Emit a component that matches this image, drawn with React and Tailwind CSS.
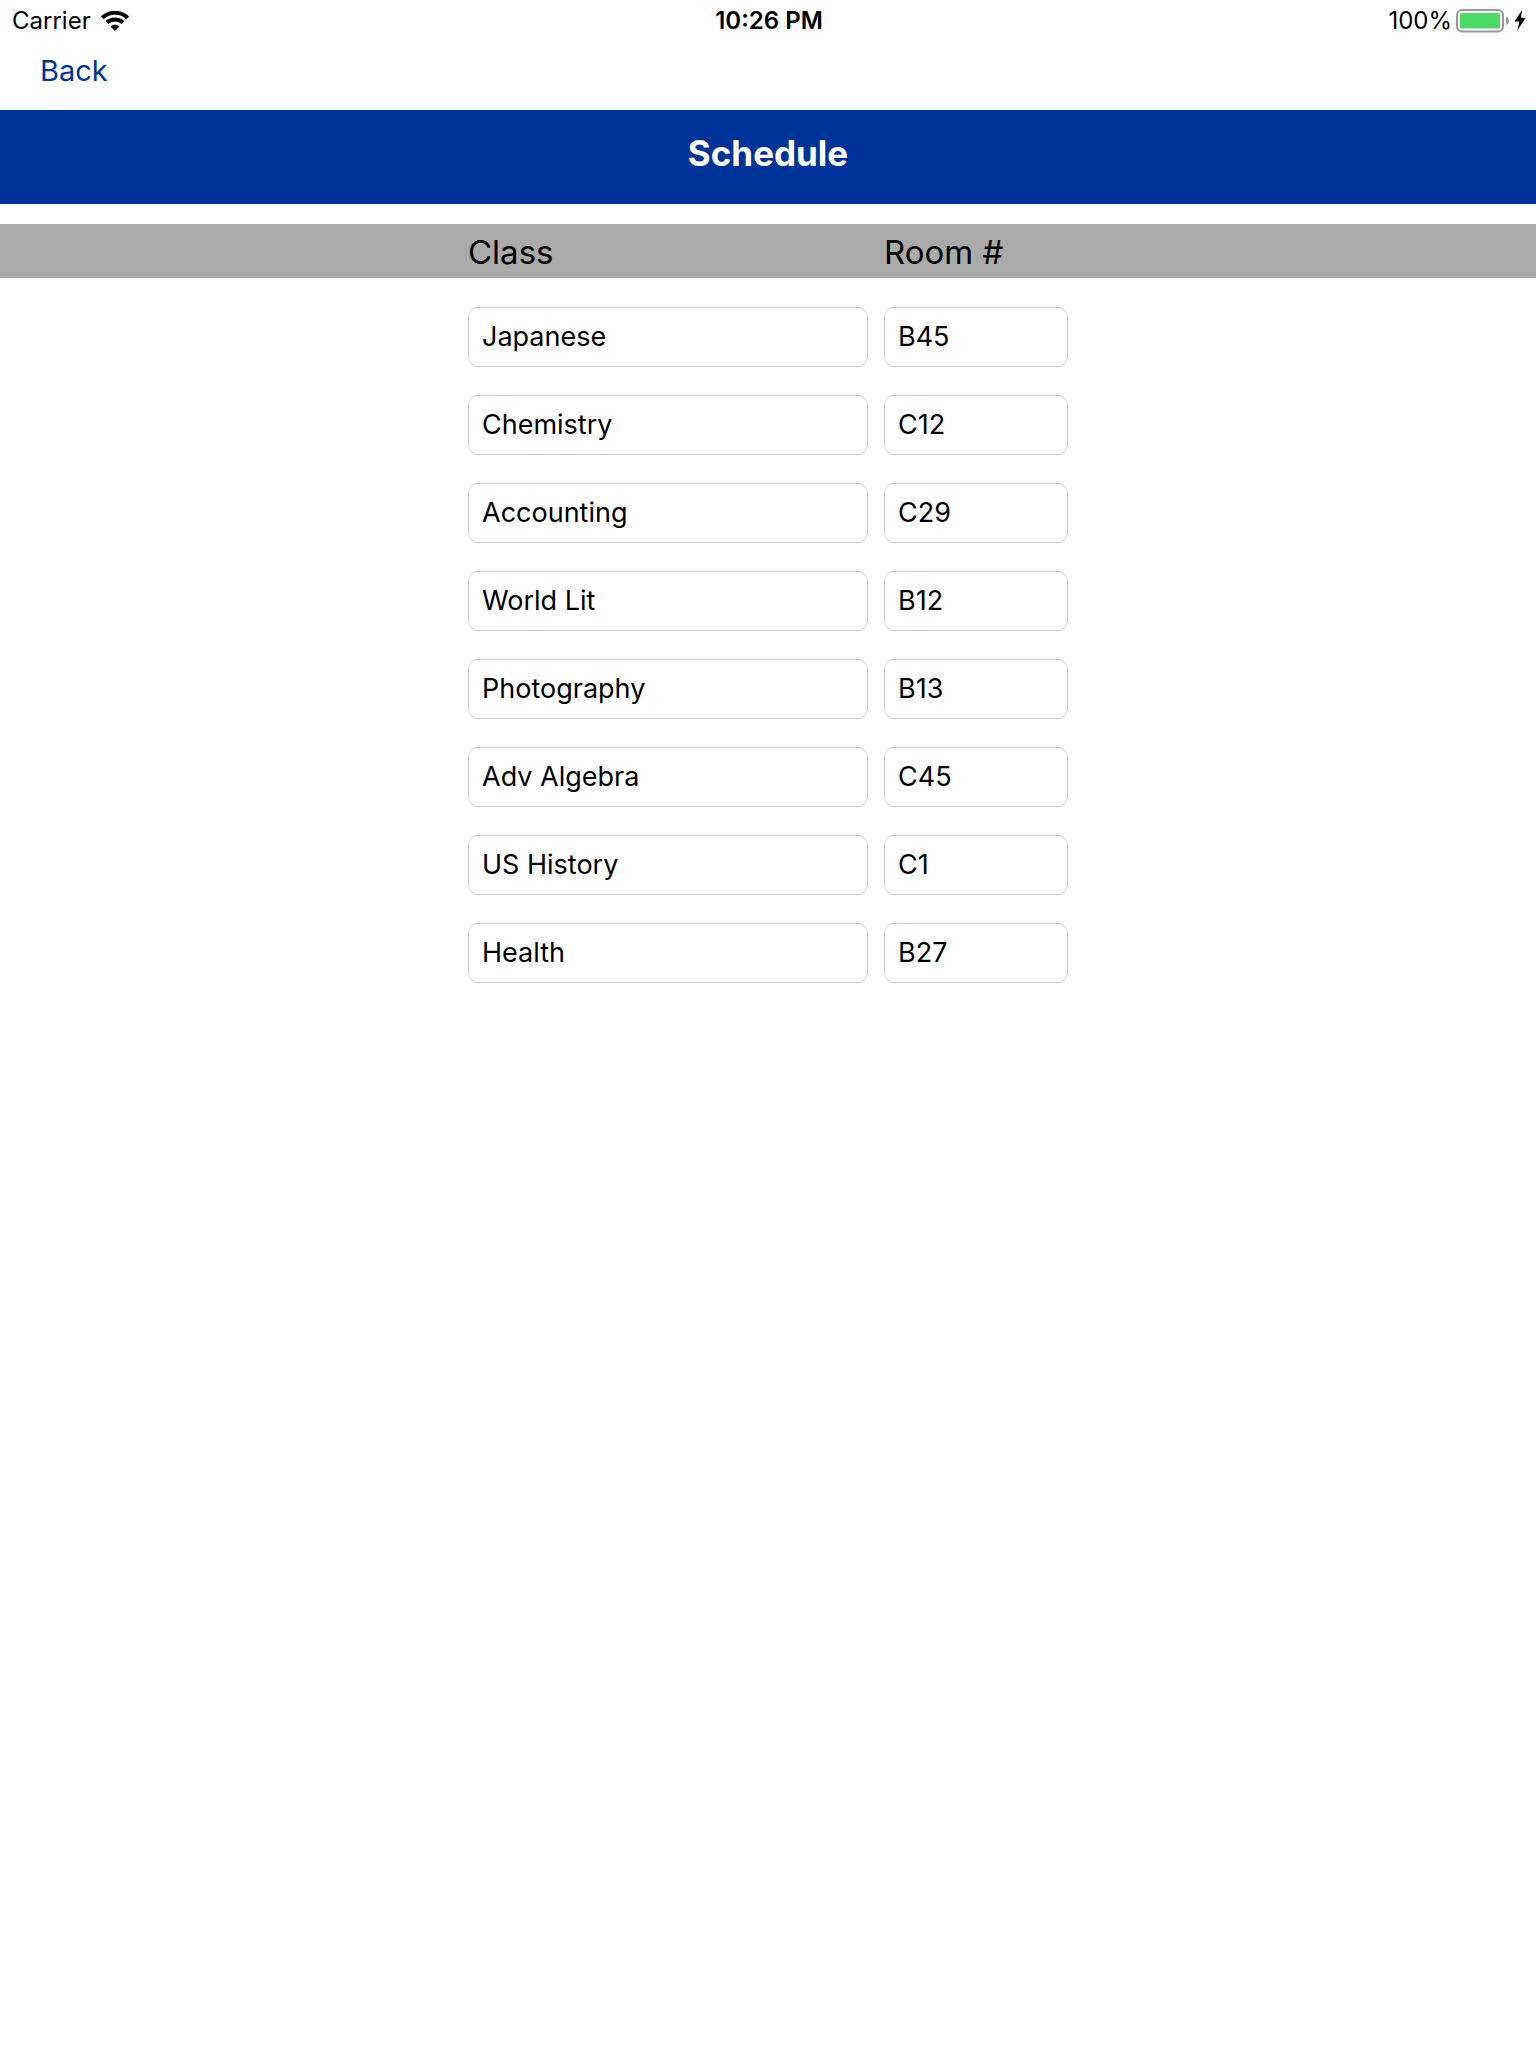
import React from 'react';

const classes = [
  { name: 'Japanese', room: 'B45' },
  { name: 'Chemistry', room: 'C12' },
  { name: 'Accounting', room: 'C29' },
  { name: 'World Lit', room: 'B12' },
  { name: 'Photography', room: 'B13' },
  { name: 'Adv Algebra', room: 'C45' },
  { name: 'US History', room: 'C1' },
  { name: 'Health', room: 'B27' },
];

const WifiIcon = () => (
  <svg className="w-7 h-5" viewBox="0 0 28 20" fill="none" stroke="black" aria-hidden="true">
    <path d="M1.3 6.8C8.4 .2 19.6 .2 26.7 6.8" strokeWidth="4" />
    <path d="M5.9 11.6C10.4 7.5 17.6 7.5 22.1 11.6" strokeWidth="4" />
    <path d="M14 20L9.5 15.6C12.2 13.2 15.8 13.2 18.5 15.6Z" fill="black" stroke="none" />
  </svg>
);

const BatteryIcon = () => (
  <svg className="w-[54px] h-6" viewBox="0 0 54 24" aria-hidden="true">
    <rect x="1" y="1" width="46" height="21.5" rx="5" fill="none" stroke="#98989a" strokeWidth="2" />
    <rect x="4" y="4" width="40" height="15.5" rx="1.5" fill="#4cd964" />
    <path d="M50 7.5C52 8.2 53 9.8 53 11.7C53 13.6 52 15.2 50 15.9Z" fill="#98989a" />
  </svg>
);

const BoltIcon = () => (
  <svg className="w-3 h-[22px]" viewBox="0 0 12 22" aria-hidden="true">
    <path d="M8 0L0.5 11.5H5.4L3.4 20.5L11.7 7.8H7Z" fill="black" />
  </svg>
);

const StatusBar = () => (
  <div className="grid grid-cols-[1fr_auto_1fr] items-center h-[42px] pl-3 pr-[10px] text-2xl">
    <div className="flex items-center gap-[10px]">
      <span>Carrier</span>
      <WifiIcon />
    </div>
    <span className="text-center font-semibold">10:26 PM</span>
    <div className="flex items-center justify-end gap-1">
      <span>100%</span>
      <BatteryIcon />
      <BoltIcon />
    </div>
  </div>
);

const fieldClass =
  'w-full min-w-0 h-[60px] px-[13px] pb-[2px] border border-[#cccccc] rounded-[10px] bg-white text-[27px]';

const App = () => {
  return (
    <div className="min-h-screen bg-white text-black font-['Inter',sans-serif]">
      <StatusBar />

      {/* Navigation */}
      <nav className="flex h-[68px] px-10">
        <button type="button" className="h-15 pb-[2px] text-[29px] text-[#003399]">
          Back
        </button>
      </nav>

      <header className="bg-[#003399] text-white text-center pt-[19px] pb-[27px]">
        <h1 className="text-[35px] leading-[48px] font-bold">Schedule</h1>
      </header>

      {/* Column titles */}
      <div className="mt-5 bg-[#aaaaaa]">
        <div className="mx-auto max-w-[600px] grid grid-cols-[1fr_184px] gap-4 pt-[2px] text-[33px] leading-[52px]">
          <span id="class-title">Class</span>
          <span id="room-title">Room #</span>
        </div>
      </div>

      {/* Class list */}
      <form className="mx-auto max-w-[600px] mt-[29px] flex flex-col gap-7">
        {classes.map((item) => (
          <div key={item.name} className="grid grid-cols-[1fr_184px] gap-4">
            <input
              type="text"
              aria-labelledby="class-title"
              defaultValue={item.name}
              className={fieldClass}
            />
            <input
              type="text"
              aria-labelledby="room-title"
              defaultValue={item.room}
              className={fieldClass}
            />
          </div>
        ))}
      </form>
    </div>
  );
};

export default App;
